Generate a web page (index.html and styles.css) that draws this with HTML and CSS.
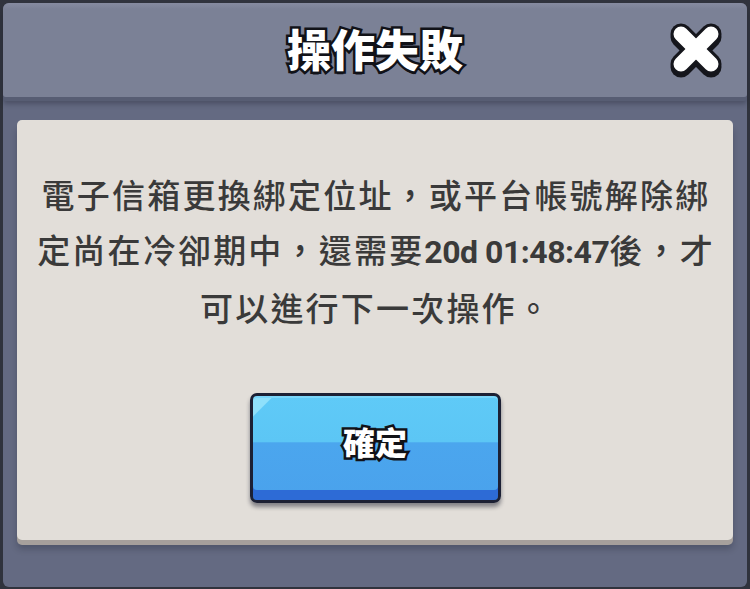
FILE: index.html
```html
<!DOCTYPE html>
<html lang="zh-Hant">
<head>
<meta charset="utf-8">
<title>操作失敗</title>
<link rel="stylesheet" href="styles.css">
</head>
<body>
<div class="screen">
  <div class="dialog">
    <div class="header">
      <h1 class="title">操作失敗</h1>
      <button class="close" aria-label="關閉">
        <svg width="56" height="56" viewBox="0 0 56 56">
          <g stroke-linecap="round">
            <line x1="12" y1="15" x2="42" y2="45" stroke="#15161c" stroke-width="21"/>
            <line x1="42" y1="15" x2="12" y2="45" stroke="#15161c" stroke-width="21"/>
            <line x1="12" y1="12" x2="42" y2="42" stroke="#15161c" stroke-width="21"/>
            <line x1="42" y1="12" x2="12" y2="42" stroke="#15161c" stroke-width="21"/>
            <line x1="12" y1="12" x2="42" y2="42" stroke="#ffffff" stroke-width="15"/>
            <line x1="42" y1="12" x2="12" y2="42" stroke="#ffffff" stroke-width="15"/>
          </g>
        </svg>
      </button>
    </div>
    <div class="panel">
      <p class="message">電子信箱更換綁定位址，或平台帳號解除綁<br>定尚在冷卻期中，還需要<span class="time">20d 01:48:47</span>後，才<br>可以進行下一次操作。</p>
      <button class="confirm"><span class="confirm-label">確定</span></button>
    </div>
  </div>
</div>
</body>
</html>
```

FILE: styles.css
```css
* { box-sizing: border-box; }
html, body { margin: 0; padding: 0; }
body {
  width: 750px;
  height: 589px;
  overflow: hidden;
  background: #30333d;
  font-family: "Noto Sans CJK TC", "Noto Sans", sans-serif;
}
.screen {
  width: 750px;
  height: 589px;
  padding: 3px 3px 2px 3px;
}
.dialog {
  height: 100%;
  background: linear-gradient(#5b6178 0, #646a82 30px, #646a82 100%);
  border-radius: 6px;
  display: flex;
  flex-direction: column;
}
.header {
  position: relative;
  height: 94px;
  flex: none;
  background: linear-gradient(#868ba0 0, #7b8196 6px, #7b8196 100%);
  border-radius: 6px 6px 3px 3px;
  box-shadow: 0 4px 0 #575d73, 0 7px 5px rgba(30, 32, 45, 0.35);
  display: flex;
  align-items: center;
  justify-content: center;
}
.title {
  margin: 0;
  font-size: 44px;
  font-weight: 900;
  line-height: 1;
  color: #ffffff;
  -webkit-text-stroke: 5px #111218;
  paint-order: stroke fill;
  text-shadow: 0 3px 0 #111218;
  letter-spacing: 0;
  padding-bottom: 4px;
}
.close {
  position: absolute;
  right: 22px;
  top: 19px;
  padding: 0;
  border: 0;
  background: none;
  width: 56px;
  height: 56px;
}
.close svg { display: block; }
.panel {
  margin: 23px 14px 0 14px;
  height: 420px;
  background: #e2ded9;
  border-radius: 5px;
  box-shadow: 0 5px 0 #a6a09c, 0 9px 6px rgba(20, 22, 35, 0.25);
  display: flex;
  flex-direction: column;
  align-items: center;
  padding-top: 47px;
}
.message {
  margin: 0;
  font-size: 33px;
  font-weight: 500;
  line-height: 55px;
  letter-spacing: 2.2px;
  color: #3a3a3a;
  text-align: center;
  padding-left: 2px;
}
.time {
  font-family: "Roboto", "Liberation Sans", sans-serif;
  font-weight: 700;
  font-size: 32px;
  letter-spacing: -0.5px;
  color: #3a3a3a;
}
.confirm {
  margin-top: 58px;
  width: 251px;
  height: 110px;
  padding: 0 0 14px 0;
  border: 3px solid #1c2034;
  border-radius: 7px;
  background:
    linear-gradient(135deg, #8fe0fb 0, #8fe0fb 14px, transparent 15px),
    linear-gradient(#5fcaf7 0, #5cc6f5 44%, #4ba6ee 45%, #4aa2ec 100%);
  box-shadow: inset 0 -10px 0 #2d6bd6, inset 0 2px 0 #7ad6fa, 0 4px 4px rgba(15, 18, 35, 0.45);
  display: flex;
  align-items: center;
  justify-content: center;
  font-family: inherit;
}
.confirm-label {
  font-size: 32px;
  font-weight: 900;
  line-height: 1;
  color: #ffffff;
  -webkit-text-stroke: 5px #111218;
  paint-order: stroke fill;
  text-shadow: 0 2px 0 #111218;
}
```
